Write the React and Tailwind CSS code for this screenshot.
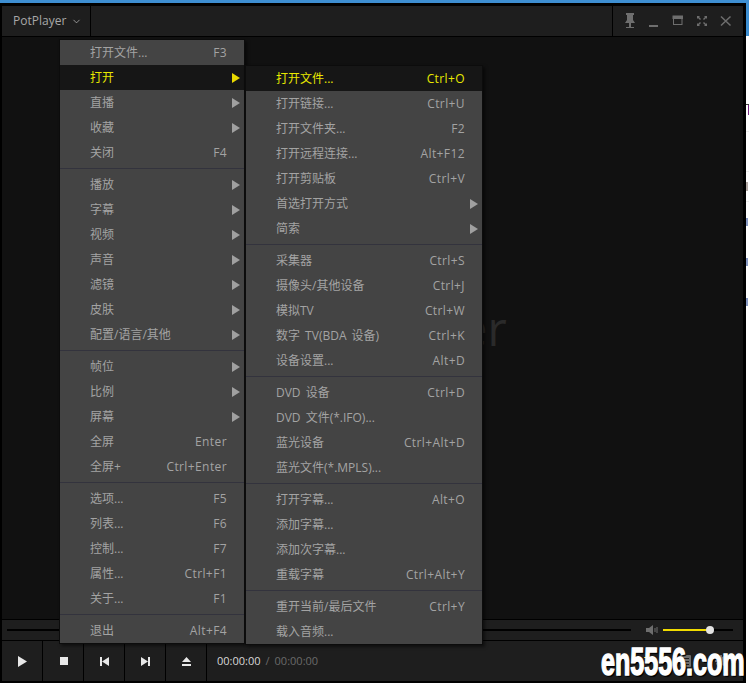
import { ChevronDown } from 'lucide-react'

const cjk = '"Open Sans", "Noto Sans CJK SC", sans-serif'

const mainMenu = [
  [
    { label: '打开文件...', key: 'F3' },
    { label: '打开', sub: true, active: true },
    { label: '直播', sub: true },
    { label: '收藏', sub: true },
    { label: '关闭', key: 'F4' },
  ],
  [
    { label: '播放', sub: true },
    { label: '字幕', sub: true },
    { label: '视频', sub: true },
    { label: '声音', sub: true },
    { label: '滤镜', sub: true },
    { label: '皮肤', sub: true },
    { label: '配置/语言/其他', sub: true },
  ],
  [
    { label: '帧位', sub: true },
    { label: '比例', sub: true },
    { label: '屏幕', sub: true },
    { label: '全屏', key: 'Enter' },
    { label: '全屏+', key: 'Ctrl+Enter' },
  ],
  [
    { label: '选项...', key: 'F5' },
    { label: '列表...', key: 'F6' },
    { label: '控制...', key: 'F7' },
    { label: '属性...', key: 'Ctrl+F1' },
    { label: '关于...', key: 'F1' },
  ],
  [{ label: '退出', key: 'Alt+F4' }],
]

const openMenu = [
  [
    { label: '打开文件...', key: 'Ctrl+O', active: true },
    { label: '打开链接...', key: 'Ctrl+U' },
    { label: '打开文件夹...', key: 'F2' },
    { label: '打开远程连接...', key: 'Alt+F12' },
    { label: '打开剪贴板', key: 'Ctrl+V' },
    { label: '首选打开方式', sub: true },
    { label: '简索', sub: true },
  ],
  [
    { label: '采集器', key: 'Ctrl+S' },
    { label: '摄像头/其他设备', key: 'Ctrl+J' },
    { label: '模拟TV', key: 'Ctrl+W' },
    { label: '数字 TV(BDA 设备)', key: 'Ctrl+K' },
    { label: '设备设置...', key: 'Alt+D' },
  ],
  [
    { label: 'DVD 设备', key: 'Ctrl+D' },
    { label: 'DVD 文件(*.IFO)...' },
    { label: '蓝光设备', key: 'Ctrl+Alt+D' },
    { label: '蓝光文件(*.MPLS)...' },
  ],
  [
    { label: '打开字幕...', key: 'Alt+O' },
    { label: '添加字幕...' },
    { label: '添加次字幕...' },
    { label: '重载字幕', key: 'Ctrl+Alt+Y' },
  ],
  [
    { label: '重开当前/最后文件', key: 'Ctrl+Y' },
    { label: '载入音频...' },
  ],
]

function Menu({ groups, className }) {
  return (
    <div className={`absolute z-10 bg-[#444444] border border-[#0c0c0c] shadow-[2px_2px_3px_rgba(0,0,0,0.5)] ${className}`}>
      {groups.map((group, i) => (
        <div key={i}>
          {i > 0 && (
            <div className="h-[7px] flex items-center">
              <div className="w-full h-px bg-[#33333d]" />
            </div>
          )}
          {group.map((item) => (
            <div
              key={item.label}
              className={`h-[25px] flex items-center justify-between pl-[30px] pr-[17px] text-[12px] ${
                item.active ? 'bg-[#161616] text-[#e8e800]' : 'text-[#a3a3a3]'
              }`}
            >
              <span className="[word-spacing:2px]">{item.label}</span>
              {item.key && <span className="tracking-[0.4px]">{item.key}</span>}
              {item.sub && (
                <svg width="8" height="10" viewBox="0 0 8 10" className="-mr-[13px]">
                  <path d="M0 0 L8 5 L0 10 Z" fill={item.active ? '#e8d800' : '#a0a0a0'} />
                </svg>
              )}
            </div>
          ))}
        </div>
      ))}
    </div>
  )
}

function CtrlButton({ children }) {
  return <div className="w-[41px] h-full flex items-center justify-center border-r border-black">{children}</div>
}

export default function App() {
  return (
    <div className="relative w-[749px] h-[683px] bg-white overflow-hidden" style={{ fontFamily: cjk }}>
      <div className="absolute top-0 left-0 w-full h-[36px] bg-[#3e8fd2]" />

      {/* bits of the page behind the window */}
      <div className="absolute left-[746px] top-[104px] w-[3px] h-px bg-[#444444]" />
      <div className="absolute left-[748px] top-[105px] w-px h-[10px] bg-[#7a2f86]" />
      <div className="absolute left-[746px] top-[131px] w-[3px] h-px bg-[#eeeeee]" />
      <div className="absolute left-[746px] top-[171px] w-[3px] h-px bg-[#eeeeee]" />
      <div className="absolute left-[746px] top-[182px] w-[2px] h-[9px] bg-[#b5aca8]" />
      <div className="absolute left-[746px] top-[201px] w-[3px] h-px bg-[#eeeeee]" />
      <div className="absolute left-[746px] top-[218px] w-[2px] h-[8px] bg-[#8a9cc6]" />
      <div className="absolute left-[746px] top-[258px] w-[2px] h-[8px] bg-[#8a9cc6]" />
      <div className="absolute left-[746px] top-[298px] w-[2px] h-[8px] bg-[#8a9cc6]" />

      <div className="relative w-[746px] h-[683px] pt-[3px]">
        <div className="h-full bg-black pt-[3px] pl-[2px] pr-[3px] pb-[3px] flex flex-col">
          {/* title bar */}
          <div className="h-[30px] flex shrink-0 bg-[#1e1e1e] text-[#a8a8a8]">
            <div className="w-[89px] flex items-center gap-[5px] pl-[11px] border-r border-black text-[12px]">
              PotPlayer
              <ChevronDown size={11} strokeWidth={1.5} className="text-[#c8c8c8]" />
            </div>
            <div className="flex-1" />
            <div className="w-[131px] flex items-center pl-[9px] gap-[8px] border-l border-black text-[#6e6e6e]">
              <svg width="16" height="16" viewBox="0 0 16 16" fill="currentColor">
                <path d="M4 0h8v2h-1v5l2 3H3l2-3V2H4z" />
                <rect x="7" y="10" width="2" height="4" />
                <rect x="4" y="14" width="8" height="1" />
              </svg>
              <svg width="16" height="16" viewBox="0 0 16 16" fill="currentColor">
                <rect x="3" y="12" width="9" height="2" />
              </svg>
              <svg width="16" height="16" viewBox="0 0 16 16" fill="none" stroke="currentColor">
                <rect x="3.5" y="3.5" width="8.5" height="8" />
                <rect x="3" y="3" width="9.5" height="2.5" fill="currentColor" />
              </svg>
              <svg width="16" height="16" viewBox="0 0 16 16" fill="currentColor">
                <path d="M3 3h3L5 4l2 2-1 1-2-2-1 1zM13 3v3l-1-1-2 2-1-1 2-2-1-1zM3 13v-3l1 1 2-2 1 1-2 2 1 1zM13 13h-3l1-1-2-2 1-1 2 2 1-1z" />
              </svg>
              <svg width="16" height="16" viewBox="0 0 16 16" fill="none" stroke="currentColor" strokeWidth="1.5">
                <path d="M3 3.5 L12.5 12.5 M12.5 3.5 L3 12.5" />
              </svg>
            </div>
          </div>

          {/* video area, the rest of the logo text is under the menus */}
          <div className="h-[582px] mt-px mb-px shrink-0 bg-[#111111] flex items-center pl-[459px]">
            <span className="text-[47px] text-[#2a2a2a]">er</span>
          </div>

          {/* seek bar */}
          <div className="h-[20px] shrink-0 bg-[#1e1e1e] flex items-center pl-[5px] pr-[10px]">
            <div className="w-[624px] h-[2px] bg-black" />
            <svg width="12" height="12" viewBox="0 0 12 12" className="ml-[15px] text-[#6e6e6e]" fill="currentColor">
              <path d="M0 4h3l4-3v10L3 8H0z" />
              <rect x="8.5" y="4" width="1" height="4" />
              <rect x="10.5" y="3" width="1" height="6" />
            </svg>
            <div className="relative ml-[5px] w-[70px] h-[2px] bg-black">
              <div className="h-full w-[47px] bg-[#f2dc00]" />
              <div className="absolute top-[-3px] left-[43px] w-[8px] h-[8px] rounded-full bg-[#e4e4e4]" />
            </div>
          </div>

          {/* controls */}
          <div className="h-[40px] mt-px shrink-0 bg-[#1e1e1e] flex items-center">
            <CtrlButton>
              <svg width="9" height="11" viewBox="0 0 9 11" fill="#e8e8e8" className="ml-px"><path d="M0 0 L9 5.5 L0 11 Z" /></svg>
            </CtrlButton>
            <CtrlButton><div className="ml-px w-[8px] h-[8px] bg-[#e8e8e8]" /></CtrlButton>
            <CtrlButton>
              <svg width="9" height="9" viewBox="0 0 9 9" fill="#e8e8e8"><path d="M0 0h2v9H0zM9 0v9L2 4.5z" /></svg>
            </CtrlButton>
            <CtrlButton>
              <svg width="9" height="9" viewBox="0 0 9 9" fill="#e8e8e8"><path d="M9 0H7v9h2zM0 0v9l7-4.5z" /></svg>
            </CtrlButton>
            <CtrlButton>
              <svg width="9" height="9" viewBox="0 0 9 9" fill="#e8e8e8"><path d="M4.5 0 L9 5 H0 Z M0 7h9v2H0z" /></svg>
            </CtrlButton>
            <div className="pl-[10px] text-[11px] flex gap-[5px]">
              <span className="text-[#d8d8d8]">00:00:00</span>
              <span className="text-[#6a6a6a]">/</span>
              <span className="text-[#6a6a6a]">00:00:00</span>
            </div>
            <div className="ml-auto flex items-center pr-[16px]">
              <div className="relative w-[10px] h-[8px] mr-[26px]">
                <div className="absolute top-0 left-0 w-[6px] h-px bg-[#e8d800]" />
                <div className="absolute top-[2px] left-[6px] w-[2px] h-[4px] bg-[#e8d800]" />
              </div>
              <svg width="11" height="12" viewBox="0 0 11 12" className="mr-[24px] text-[#6e6e6e]" fill="currentColor">
                <path d="M1 0h9a1 1 0 0 1 1 1v10a1 1 0 0 1-1 1H1a1 1 0 0 1-1-1V1a1 1 0 0 1 1-1z" />
                <path d="M2 3h7v1H2zM2 6h7v1H2zM2 9h7v1H2z" fill="#1e1e1e" />
              </svg>
              <svg width="12" height="12" viewBox="0 0 12 12" className="text-[#6e6e6e]" fill="currentColor">
                <path d="M5 0h2v2l2-1 2 2-1 2h2v2h-2l1 2-2 2-2-1v2H5v-2l-2 1-2-2 1-2H0V5h2L1 3l2-2 2 1z" />
              </svg>
            </div>
          </div>
        </div>
      </div>

      <Menu groups={mainMenu} className="left-[59px] top-[39px] w-[186px]" />
      <Menu groups={openMenu} className="left-[245px] top-[65px] w-[238px]" />

      {/* site watermark */}
      <div
        className="absolute z-20 right-[4px] bottom-[2px] text-white text-[38px] font-bold leading-none scale-x-[0.66] origin-right [-webkit-text-stroke:1.5px_white] [text-shadow:2px_2px_1px_#000]"
        style={{ fontFamily: '"Liberation Sans", sans-serif' }}
      >
        en5556.com
      </div>
    </div>
  )
}
